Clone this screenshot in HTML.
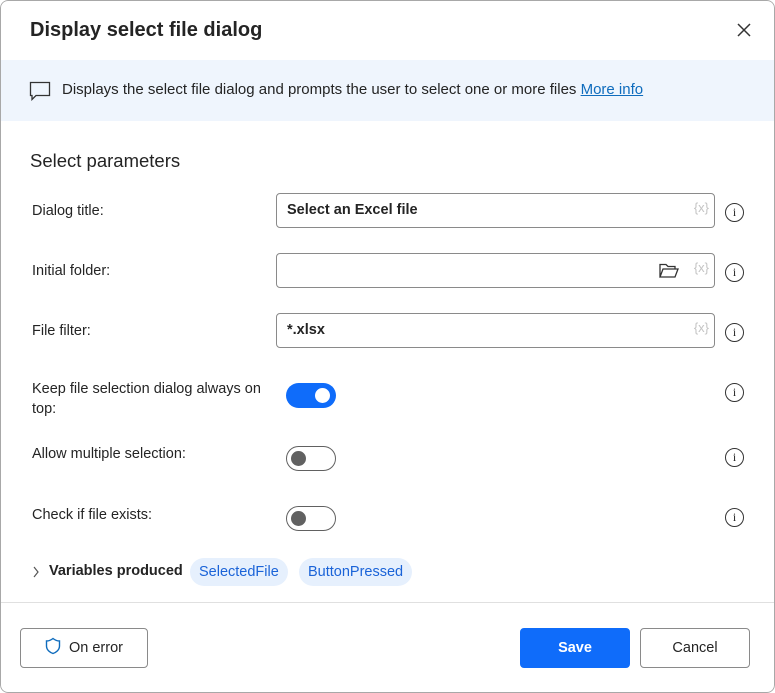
<!DOCTYPE html>
<html><head><meta charset="utf-8"><style>
*{box-sizing:border-box;margin:0;padding:0}
body{width:775px;height:693px;background:#fff;font-family:"Segoe UI","Liberation Sans",sans-serif;color:#242424;position:relative;overflow:hidden}
.dlg{position:absolute;left:0;top:0;width:775px;height:693px;border-radius:8px;background:#fff;overflow:hidden}
.bord{position:absolute;left:0;top:0;width:775px;height:693px;border:1px solid #a8a8a8;border-radius:8px;pointer-events:none}
.abs{position:absolute}
.title{left:30px;top:19px;font-size:20px;font-weight:bold}
.close{left:736px;top:22px}
.banner{left:0;top:60px;width:775px;height:61px;background:#eff5fd}
.btxt{left:62px;top:81px;font-size:15px;color:#242424}
.btxt a{color:#0f6cbd;text-decoration:underline}
.sec{left:30px;top:150px;font-size:18.5px}
.lbl{left:32px;font-size:14.5px;line-height:20px}
.inp{left:276px;width:439px;height:35px;border:1px solid #8a8a8a;border-radius:4px;font-size:14.5px;font-weight:bold;padding:8px 10px}
.x{position:absolute;right:5px;top:6px;font-size:13px;color:#c4c4c4;font-weight:normal}
.info{left:725px;width:19px;height:19px;border:1.4px solid #333;border-radius:50%;font-size:12px;text-align:center;line-height:16px;font-family:"Liberation Serif",serif}
.tog{left:286px;width:50px;height:25px;border-radius:13px}
.on{background:#0f6cfa}
.on::after{content:"";position:absolute;right:6px;top:5px;width:15px;height:15px;border-radius:50%;background:#fff}
.off{border:1.5px solid #616161;background:#fff}
.off::after{content:"";position:absolute;left:4px;top:4px;width:15px;height:15px;border-radius:50%;background:#616161}
.pill{top:558px;height:28px;border-radius:14px;background:#e6f0fd;color:#1a63d8;font-size:14.5px;line-height:28px;padding:0 9px}
.btn{top:628px;height:40px;border:1px solid #8a8a8a;border-radius:4px;font-size:14.5px;text-align:center;line-height:38px}
</style></head><body><div class="dlg">
<div class="abs title">Display select file dialog</div>
<svg class="abs close" width="16" height="16" viewBox="0 0 16 16"><path d="M2 2L14 14M14 2L2 14" stroke="#333" stroke-width="1.5"/></svg>
<div class="abs banner"></div>
<svg class="abs" style="left:29px;top:81px" width="22" height="20" viewBox="0 0 22 20"><path d="M1.5 1.5H20.5V14.5H7L3 18.5V14.5H1.5Z" fill="none" stroke="#333" stroke-width="1.3"/></svg>
<div class="abs btxt">Displays the select file dialog and prompts the user to select one or more files <a>More info</a></div>
<div class="abs sec">Select parameters</div>

<div class="abs lbl" style="top:201px">Dialog title:</div>
<div class="abs inp" style="top:193px">Select an Excel file<span class="x">{x}</span></div>
<div class="abs info" style="top:203px">i</div>

<div class="abs lbl" style="top:261px">Initial folder:</div>
<div class="abs inp" style="top:253px"><svg style="position:absolute;right:35px;top:9px" width="20" height="15" viewBox="0 0 20 15"><path d="M1 14V1.5H7L9 3.5H16V6M1 14L4 6H19L16 14Z" fill="none" stroke="#333" stroke-width="1.3"/></svg><span class="x">{x}</span></div>
<div class="abs info" style="top:263px">i</div>

<div class="abs lbl" style="top:379px;width:240px">Keep file selection dialog always on top:</div>
<div class="abs lbl" style="top:321px">File filter:</div>
<div class="abs inp" style="top:313px">*.xlsx<span class="x">{x}</span></div>
<div class="abs info" style="top:323px">i</div>

<div class="abs tog on" style="top:383px"></div>
<div class="abs info" style="top:383px">i</div>

<div class="abs lbl" style="top:444px">Allow multiple selection:</div>
<div class="abs tog off" style="top:446px"></div>
<div class="abs info" style="top:448px">i</div>

<div class="abs lbl" style="top:505px">Check if file exists:</div>
<div class="abs tog off" style="top:506px"></div>
<div class="abs info" style="top:508px">i</div>

<svg class="abs" style="left:32px;top:566px" width="8" height="12" viewBox="0 0 8 12"><path d="M2 1L6 6L2 11" fill="none" stroke="#555" stroke-width="1.2"/></svg>
<div class="abs" style="left:49px;top:563px;font-size:14.5px;font-weight:bold">Variables produced</div>
<div class="abs pill" style="left:190px">SelectedFile</div>
<div class="abs pill" style="left:299px">ButtonPressed</div>

<div class="abs" style="left:0;top:602px;width:775px;height:1px;background:#e0e0e0"></div>
<div class="abs btn" style="left:20px;width:128px"><svg style="vertical-align:-3px;margin-right:8px" width="16" height="18" viewBox="0 0 16 18"><path d="M8 1.5C5.5 3.5 3.5 4 1.5 4V9C1.5 13 5 15.5 8 16.5C11 15.5 14.5 13 14.5 9V4C12.5 4 10.5 3.5 8 1.5Z" fill="none" stroke="#0f6cbd" stroke-width="1.4"/></svg>On error</div>
<div class="abs btn" style="left:520px;width:110px;background:#0f6cfa;border-color:#0f6cfa;color:#fff;font-weight:bold">Save</div>
<div class="abs btn" style="left:640px;width:110px">Cancel</div>
<div class="bord"></div>
</div></body></html>
